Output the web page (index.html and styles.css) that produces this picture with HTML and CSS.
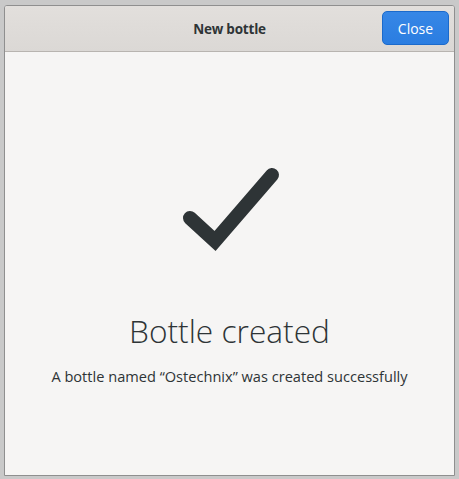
FILE: index.html
```html
<!DOCTYPE html>
<html>
<head>
<meta charset="utf-8">
<link rel="stylesheet" href="styles.css">
</head>
<body>
<div class="window">
  <header class="headerbar">
    <div class="title">New bottle</div>
    <button class="close-btn">Close</button>
  </header>
  <main class="content">
    <svg class="check" width="120" height="110" viewBox="0 0 120 110">
      <path d="M21 61 L46 84 L103 18" fill="none" stroke="#2e3436" stroke-width="14" stroke-linecap="round" stroke-linejoin="miter"/>
    </svg>
    <h1 class="heading">Bottle created</h1>
    <p class="desc">A bottle named “Ostechnix” was created successfully</p>
  </main>
</div>
</body>
</html>
```
FILE: styles.css
```css
html, body {
  margin: 0;
  padding: 0;
}
body {
  width: 459px;
  height: 479px;
  background: #c9c9c9;
  font-family: "Open Sans", "Noto Sans", sans-serif;
  padding: 5px 4px 3px 4px;
  box-sizing: border-box;
}
.window {
  height: 471px;
  display: flex;
  flex-direction: column;
  border: 1px solid #8f8f8f;
  border-radius: 3px 3px 0 0;
  overflow: hidden;
  background: #f6f5f4;
  box-sizing: border-box;
}
.headerbar {
  height: 46px;
  flex: none;
  position: relative;
  display: flex;
  align-items: center;
  justify-content: center;
  background: linear-gradient(#e2dfdc, #dbd8d5);
  border-bottom: 1px solid #b8b4b0;
  box-sizing: border-box;
}
.title {
  font-weight: 700;
  font-size: 13.5px;
  color: #2e3436;
  letter-spacing: -0.2px;
}
.close-btn {
  position: absolute;
  right: 5px;
  top: 5px;
  width: 67px;
  height: 34px;
  border: 1px solid #1b6acb;
  border-radius: 5px;
  background: linear-gradient(#3787e6, #2a7de1);
  color: #ffffff;
  font-family: "Open Sans", "Noto Sans", sans-serif;
  font-size: 14px;
  padding: 0;
}
.content {
  flex: 1;
  display: flex;
  flex-direction: column;
  align-items: center;
  padding-top: 105px;
}
.check {
  display: block;
  margin-left: -2px;
}
.heading {
  margin: 46px 0 0 0;
  font-weight: 300;
  font-size: 31.7px;
  line-height: 36px;
  color: #2e3436;
}
.desc {
  margin: 17px 0 0 0;
  font-size: 14.6px;
  line-height: 20px;
  color: #2e3436;
}
```
